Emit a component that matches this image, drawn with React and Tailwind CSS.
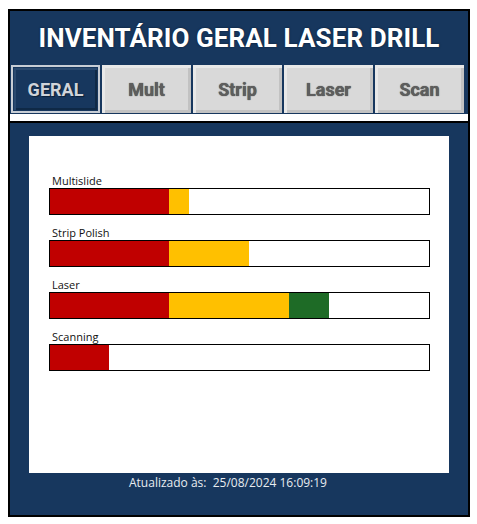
import React from 'react';

const tabs = ['GERAL', 'Mult', 'Strip', 'Laser', 'Scan'];

const bars = [
  { label: 'Multislide', segs: [['bg-[#c00000]', 119], ['bg-[#ffc000]', 20]] },
  { label: 'Strip Polish', segs: [['bg-[#c00000]', 119], ['bg-[#ffc000]', 80]] },
  { label: 'Laser', segs: [['bg-[#c00000]', 119], ['bg-[#ffc000]', 120], ['bg-[#1e6b26]', 40]] },
  { label: 'Scanning', segs: [['bg-[#c00000]', 59]] },
];

function Tab({ name, active }) {
  if (active) {
    return (
      <div className="w-[89px] h-[48px] border-2 border-[#c7cdd5] p-[1px]">
        <div className="h-full w-full bg-[#17375e] flex items-center justify-center shadow-[inset_2px_2px_0_#2a4a70,inset_-2px_-2px_0_#0f2946]">
          <span className="text-[18px] font-bold text-[#d0d4da] [text-shadow:1px_1px_1px_#0b1f36]" style={{ fontFamily: 'Roboto, "Liberation Sans", sans-serif' }}>
            {name}
          </span>
        </div>
      </div>
    );
  }
  return (
    <div className="w-[89px] h-[48px] bg-[#d9d9d9] flex items-center justify-center shadow-[inset_3px_3px_0_#e8e8e8,inset_-3px_-3px_0_#c2c2c2]">
      <span className="text-[18px] font-bold text-[#5e5e5e] [text-shadow:0_0_1px_#333]" style={{ fontFamily: 'Roboto, "Liberation Sans", sans-serif' }}>
        {name}
      </span>
    </div>
  );
}

export default function App() {
  return (
    <div className="w-[477px] h-[524px] bg-white pt-[9px] pl-[8px]">
      <div className="w-[462px] h-[508px] border-2 border-black bg-[#17375e] flex flex-col">
        <div className="h-[54px] flex items-center justify-center pt-[1px]">
          <h1 className="text-[26px] font-bold text-white tracking-[0.1px] [text-shadow:0_0_2px_#0a1a2e]" style={{ fontFamily: 'Roboto, "Liberation Sans", sans-serif' }}>
            INVENTÁRIO GERAL LASER DRILL
          </h1>
        </div>
        <div className="flex gap-[2px] pl-[1px] h-[49px]">
          {tabs.map((t, i) => (
            <Tab key={t} name={t} active={i === 0} />
          ))}
        </div>
        <div className="h-[7px] bg-white" />
        <div className="h-[2px] bg-black" />
        <div className="flex-1 pt-[13px] px-[19px] flex flex-col">
          <div className="h-[337px] bg-white pl-[20px] pr-[19px] pt-[38px]">
            {bars.map((b) => (
              <div key={b.label} className="mb-[11px]">
                <div className="text-[11px] leading-[14px] pl-[3px] text-[#111]" style={{ fontFamily: '"Open Sans", "Liberation Sans", sans-serif' }}>
                  {b.label}
                </div>
                <div className="h-[27px] border border-black flex">
                  {b.segs.map(([c, w], j) => (
                    <div key={j} className={c} style={{ width: w }} />
                  ))}
                </div>
              </div>
            ))}
          </div>
          <div className="pl-[100px] text-[12px] text-[#e8ecf0] mt-[1px]" style={{ fontFamily: '"Open Sans", "Liberation Sans", sans-serif' }}>
            Atualizado às:&nbsp; 25/08/2024 16:09:19
          </div>
        </div>
      </div>
    </div>
  );
}
